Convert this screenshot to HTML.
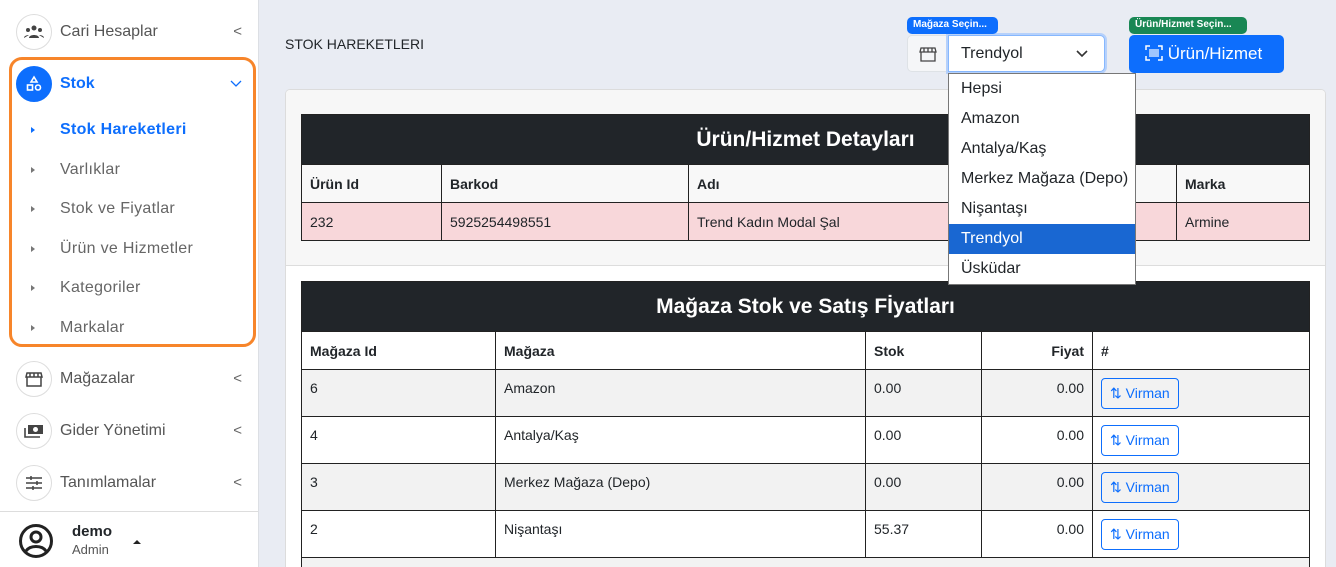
<!DOCTYPE html>
<html><head><meta charset="utf-8"><style>
*{box-sizing:border-box;margin:0;padding:0}
html{width:1336px;height:567px;overflow:hidden}
body{width:1336px;height:567px;overflow:hidden;background:#e9ecf3;font-family:"Liberation Sans",sans-serif;color:#212529;position:relative}
.sb{position:absolute;left:0;top:0;width:259px;height:567px;background:#fff;border-right:1px solid #dcdfe4}
.it{position:absolute;left:16px;width:240px;height:36px;display:flex;align-items:center;font-size:16px;color:#555}
.ic{width:36px;height:36px;border:1px solid #ddd;border-radius:50%;display:flex;align-items:center;justify-content:center;margin-right:8px;color:#444}
.chev{position:absolute;right:14px;top:9px;font-size:15px;color:#666}
.sub{position:absolute;left:60px;font-size:16px;color:#666;letter-spacing:0.3px}
.dot{position:absolute;left:31px;width:0;height:0;border-left:4px solid #777;border-top:3px solid transparent;border-bottom:3px solid transparent}
.card{position:absolute;left:285px;top:89px;width:1041px;height:478px;background:#fff;border:1px solid #dcdcdc;border-bottom:none;border-radius:5px 5px 0 0;overflow:hidden}
.chd{position:absolute;left:0;top:0;width:100%;height:176px;background:#f7f7f7;border-bottom:1px solid #ddd}
table{position:absolute;border-collapse:collapse;font-size:14px}
td,th{border:1px solid #222;padding:0 8px;text-align:left}
th{font-weight:bold}
.tt{background:#212529;color:#fff;font-size:21px;font-weight:bold;text-align:center}
.vb{display:inline-block;border:1px solid #0d6efd;color:#0d6efd;border-radius:4px;padding:6px 8px;font-size:14px;margin-top:8px}
</style></head><body>
<div class="sb">
 <div class="it" style="top:14px"><div class="ic"><svg width="20" height="14" viewBox="0 0 20 14"><circle cx="10" cy="3" r="2.5" fill="#444"/><circle cx="4" cy="5" r="2" fill="#444"/><circle cx="16" cy="5" r="2" fill="#444"/><path d="M5 13c0-4 10-4 10 0zM0 13c0-3 5-3 5-3M20 13c0-3-5-3-5-3" fill="#444"/></svg></div>Cari Hesaplar<span class="chev">&lt;</span></div>
 <div style="position:absolute;left:9px;top:57px;width:247px;height:290px;border:3px solid #f7852a;border-radius:13px"></div>
 <div class="it" style="top:66px;color:#0d6efd;font-weight:bold"><div class="ic" style="background:#0d6efd;border-color:#0d6efd"><svg width="18" height="18" viewBox="0 0 18 18"><path d="M9 2l3 5H6z" fill="none" stroke="#fff" stroke-width="1.6"/><rect x="2.5" y="10" width="5" height="5" fill="none" stroke="#fff" stroke-width="1.6"/><circle cx="13" cy="12.5" r="2.5" fill="none" stroke="#fff" stroke-width="1.6"/></svg></div>Stok<span class="chev" style="font-weight:normal;color:#0d6efd"><svg width="12" height="8" viewBox="0 0 12 8"><path d="M1 1l5 5 5-5" fill="none" stroke="#0d6efd" stroke-width="1.3"/></svg></span></div>
 <div class="dot" style="top:127px;border-left-color:#0d6efd"></div><div class="sub" style="top:121px;color:#0d6efd;font-weight:bold">Stok Hareketleri</div>
 <div class="dot" style="top:167px"></div><div class="sub" style="top:161px">Varlıklar</div>
 <div class="dot" style="top:206px"></div><div class="sub" style="top:200px">Stok ve Fiyatlar</div>
 <div class="dot" style="top:246px"></div><div class="sub" style="top:240px">Ürün ve Hizmetler</div>
 <div class="dot" style="top:285px"></div><div class="sub" style="top:279px">Kategoriler</div>
 <div class="dot" style="top:325px"></div><div class="sub" style="top:319px">Markalar</div>
 <div class="it" style="top:361px"><div class="ic"><svg width="18" height="16" viewBox="0 0 18 16"><path d="M2 2h14l1 4H1zM2 6v9h14V6M5 2v4M9 2v4M13 2v4" fill="none" stroke="#444" stroke-width="1.5"/></svg></div>Mağazalar<span class="chev">&lt;</span></div>
 <div class="it" style="top:413px"><div class="ic"><svg width="20" height="14" viewBox="0 0 20 14"><rect x="4" y="1" width="15" height="9" fill="#444"/><circle cx="11.5" cy="5.5" r="2.5" fill="#fff"/><path d="M1 4v9h15" fill="none" stroke="#444" stroke-width="1.6"/></svg></div>Gider Yönetimi<span class="chev">&lt;</span></div>
 <div class="it" style="top:465px"><div class="ic"><svg width="18" height="16" viewBox="0 0 18 16"><path d="M1 3h16M1 8h16M1 13h16M6 1v4M12 6v4M8 11v4" stroke="#444" stroke-width="1.5"/></svg></div>Tanımlamalar<span class="chev">&lt;</span></div>
 <div style="position:absolute;left:0;top:511px;width:258px;border-top:1px solid #ddd"></div>
 <svg style="position:absolute;left:18px;top:523px" width="36" height="36" viewBox="0 0 36 36"><circle cx="18" cy="18" r="15.5" fill="none" stroke="#222" stroke-width="3"/><circle cx="18" cy="14" r="5" fill="none" stroke="#222" stroke-width="3"/><path d="M8 28c4-6 16-6 20 0" fill="none" stroke="#222" stroke-width="3"/></svg>
 <div style="position:absolute;left:72px;top:523px;font-size:15px;font-weight:bold">demo</div>
 <div style="position:absolute;left:72px;top:542px;font-size:13px;color:#555">Admin</div>
 <div style="position:absolute;left:133px;top:540px;border-bottom:4px solid #222;border-left:4px solid transparent;border-right:4px solid transparent"></div>
</div>
<div style="position:absolute;left:285px;top:36px;font-size:14px">STOK HAREKETLERI</div>
<div class="card"><div class="chd"></div>
<table style="left:15px;top:24px;width:1009px">
<tr style="height:50px"><td colspan="5" class="tt">Ürün/Hizmet Detayları</td></tr>
<tr style="height:38px;background:#f8f8f8"><th style="width:140px">Ürün Id</th><th style="width:247px">Barkod</th><th style="width:300px">Adı</th><th style="width:188px"></th><th>Marka</th></tr>
<tr style="height:38px;background:#f8d7da"><td>232</td><td>5925254498551</td><td>Trend Kadın Modal Şal</td><td></td><td>Armine</td></tr>
</table>
<table style="left:15px;top:191px;width:1009px">
<tr style="height:50px"><td colspan="5" class="tt">Mağaza Stok ve Satış Fİyatları</td></tr>
<tr style="height:38px"><th style="width:194px">Mağaza Id</th><th style="width:370px">Mağaza</th><th style="width:116px">Stok</th><th style="width:111px;text-align:right">Fiyat</th><th>#</th></tr>
<tr style="height:47px;background:#f2f2f2;vertical-align:top"><td style="padding-top:10px">6</td><td style="padding-top:10px">Amazon</td><td style="padding-top:10px">0.00</td><td style="padding-top:10px;text-align:right">0.00</td><td><span class="vb">⇅ Virman</span></td></tr>
<tr style="height:47px;vertical-align:top"><td style="padding-top:10px">4</td><td style="padding-top:10px">Antalya/Kaş</td><td style="padding-top:10px">0.00</td><td style="padding-top:10px;text-align:right">0.00</td><td><span class="vb">⇅ Virman</span></td></tr>
<tr style="height:47px;background:#f2f2f2;vertical-align:top"><td style="padding-top:10px">3</td><td style="padding-top:10px">Merkez Mağaza (Depo)</td><td style="padding-top:10px">0.00</td><td style="padding-top:10px;text-align:right">0.00</td><td><span class="vb">⇅ Virman</span></td></tr>
<tr style="height:47px;vertical-align:top"><td style="padding-top:10px">2</td><td style="padding-top:10px">Nişantaşı</td><td style="padding-top:10px">55.37</td><td style="padding-top:10px;text-align:right">0.00</td><td><span class="vb">⇅ Virman</span></td></tr>
</table>
<div style="position:absolute;left:15px;top:468px;width:1009px;height:20px;background:#f2f2f2;border-left:1px solid #222;border-right:1px solid #222"></div>
</div>
<div style="position:absolute;left:907px;top:35px;width:42px;height:37px;background:#f5f6f8;border:1px solid #dee2e6;border-radius:5px 0 0 5px;display:flex;align-items:center;justify-content:center"><svg width="18" height="16" viewBox="0 0 18 16"><path d="M2 2h14l1 4H1zM2 6v9h14V6M5 2v4M9 2v4M13 2v4" fill="none" stroke="#444" stroke-width="1.3"/></svg></div>
<div style="position:absolute;left:946px;top:33px;width:161px;height:41px;border:3px solid #b6d1fb;border-radius:0 7px 7px 0"></div>
<div style="position:absolute;left:948px;top:35px;width:157px;height:37px;background:#fff;border:1px solid #86b7fe;border-radius:0 5px 5px 0;font-size:16px;padding:9px 12px">Trendyol<svg style="position:absolute;right:16px;top:14px" width="12" height="8" viewBox="0 0 12 8"><path d="M1 1l5 5 5-5" fill="none" stroke="#333" stroke-width="1.6"/></svg></div>
<div style="position:absolute;left:907px;top:17px;width:91px;height:17px;background:#0d6efd;color:#fff;border-radius:5px;font-size:10px;font-weight:bold;padding:2px 6px">Mağaza Seçin...</div>
<div style="position:absolute;left:1129px;top:35px;width:155px;height:38px;background:#0d6efd;border-radius:5px;color:#fff;font-size:17px;padding:9px 0 0 16px;white-space:nowrap"><svg width="18" height="16" viewBox="0 0 18 16" style="vertical-align:-2px"><path d="M1 5V1h4M13 1h4v4M17 11v4h-4M5 15H1v-4" fill="none" stroke="#fff" stroke-width="1.5"/><path d="M5 4v8M7 4v8M9 4v8M11 4v8M13 4v8" stroke="#fff" stroke-width="1.2"/></svg> Ürün/Hizmet</div>
<div style="position:absolute;left:1129px;top:17px;width:118px;height:17px;background:#198754;color:#fff;border-radius:5px;font-size:10px;font-weight:bold;padding:2px 6px">Ürün/Hizmet Seçin...</div>
<div style="position:absolute;left:948px;top:73px;width:188px;height:212px;background:#fff;border:1px solid #777;font-size:16px">
<div style="height:30px;padding:6px 12px">Hepsi</div><div style="height:30px;padding:6px 12px">Amazon</div><div style="height:30px;padding:6px 12px">Antalya/Kaş</div><div style="height:30px;padding:6px 12px;white-space:nowrap">Merkez Mağaza (Depo)</div><div style="height:30px;padding:6px 12px">Nişantaşı</div><div style="height:30px;padding:6px 12px;background:#1967d2;color:#fff">Trendyol</div><div style="height:30px;padding:6px 12px">Üsküdar</div>
</div>
</body></html>
